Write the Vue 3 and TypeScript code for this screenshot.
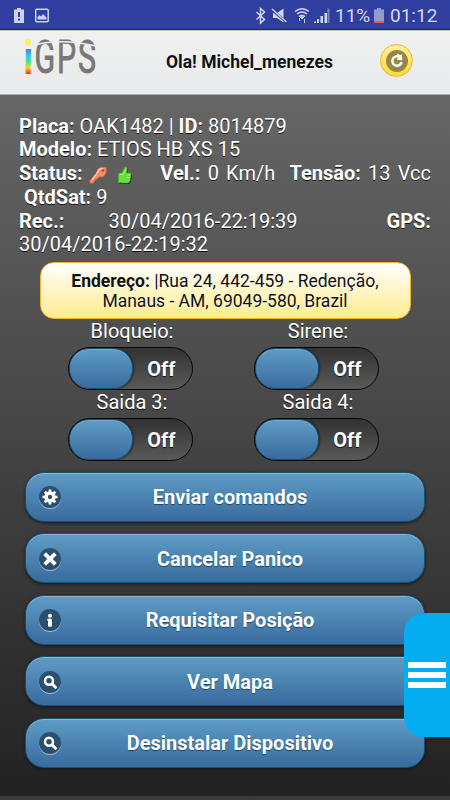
<script setup lang="ts">
import { ref } from 'vue'

interface Relay { label: string; on: boolean }
interface Action { label: string; icon: 'gear' | 'close' | 'info' | 'search' }

const relays = ref<Relay[]>([
  { label: 'Bloqueio:', on: false },
  { label: 'Sirene:', on: false },
  { label: 'Saida 3:', on: false },
  { label: 'Saida 4:', on: false },
])

const actions: Action[] = [
  { label: 'Enviar comandos', icon: 'gear' },
  { label: 'Cancelar Panico', icon: 'close' },
  { label: 'Requisitar Posição', icon: 'info' },
  { label: 'Ver Mapa', icon: 'search' },
  { label: 'Desinstalar Dispositivo', icon: 'search' },
]
</script>

<template>
  <div class="screen">
    <div class="statusbar">
      <svg class="sb-left" width="40" height="16" viewBox="0 0 40 16">
        <path fill="#cdd0ee" fill-rule="evenodd" d="M4 0h4v1.500h3V15H1V1.500h3zM5 4v5h2V4zM5 10.500v2h2v-2z" />
        <rect x="22.700" y="1.200" width="12.500" height="12.500" rx="1" fill="none" stroke="#cdd0ee" stroke-width="1.500" />
        <path fill="#cdd0ee" d="M24.500 11.500V9l2-2 1.500 1.500 2-2.500 3.500 3.500v2z" />
      </svg>
      <svg class="sb-icons" width="76" height="18" viewBox="0 0 76 18">
        <path d="M1.500 5l8 7.500-4 3.500V1.500l4 3.500-8 7.500" fill="none" stroke="#d2d5f2" stroke-width="1.500" />
        <path d="M18 6h4l6.500-4.500v14L22 11h-4z" fill="#d2d5f2" />
        <path d="M16 2l16 13.500" stroke="#303e9f" stroke-width="2.500" />
        <path d="M17 2l14.500 13" stroke="#d2d5f2" stroke-width="1.400" />
        <g fill="none" stroke="#d2d5f2" stroke-width="1.500">
          <path d="M40 4.500q7-5.500 14 0M42 7q5-4 10 0M44 9.700q3-2.500 6 0" />
        </g>
        <path d="M47 12l-2-2h4zM44.500 11v3M49.500 16v-4" stroke="#d2d5f2" fill="#d2d5f2" />
        <path d="M59 16v-1.500h2V16M62 16v-4h2v4M65.500 16V9h2.500v7M69.500 16V6H72v10" fill="#d2d5f2" />
        <path d="M72.500 16V1.500h2V16" fill="#7881c2" />
      </svg>
      <span class="sb-pct">11%</span>
      <svg class="sb-batt" width="10" height="16" viewBox="0 0 10 16">
        <path d="M3 0h4v1.500h3V15H0V1.500h3z" fill="#949bd0" />
        <path d="M0 13h10v2H0z" fill="#d8604c" />
      </svg>
      <span class="sb-time">01:12</span>
    </div>

    <header class="header">
      <svg class="logo" width="80" height="62" viewBox="0 0 80 62">
        <defs>
          <linearGradient id="rainbow" gradientUnits="userSpaceOnUse" x1="0" y1="8" x2="0" y2="43">
            <stop offset="0" stop-color="#fff34a" />
            <stop offset=".18" stop-color="#fff34a" />
            <stop offset=".27" stop-color="#4379f5" />
            <stop offset=".48" stop-color="#35c5ee" />
            <stop offset=".66" stop-color="#48eb64" />
            <stop offset=".82" stop-color="#fbd21e" />
            <stop offset="1" stop-color="#ff2a13" />
          </linearGradient>
        </defs>
        <text class="logo-i" x="2.600" y="42.500" textLength="9.500" lengthAdjust="spacingAndGlyphs" fill="url(#rainbow)">i</text>
        <text class="logo-word" x="13.400" y="42.200" textLength="63.500" lengthAdjust="spacingAndGlyphs">GPS</text>
        <path d="M14 14q26-7 61 1" fill="none" stroke="#eeefef" stroke-width="1.600" />
      </svg>
      <h1 class="greeting">Ola! Michel_menezes</h1>
      <button class="refresh" aria-label="Atualizar">
        <svg width="22" height="22" viewBox="0 0 22 22">
          <circle cx="11" cy="11" r="11" fill="#968743" />
          <path d="M14 7.400A4.700 4.700 0 1 0 15.600 12" fill="none" stroke="#fff" stroke-width="2.500" />
          <path d="M11.700 3.300l1.800 1.700 2.500-.5.300 5.700-5.800-.4 1.900-2.100-1.700-1.700z" fill="#fff" />
        </svg>
      </button>
    </header>

    <main class="content">
      <section class="info">
        <div class="line"><span><b>Placa:</b> OAK1482 | <b>ID:</b> 8014879</span></div>
        <div class="line"><span><b>Modelo:</b> ETIOS HB XS 15</span></div>
        <div class="line spread">
          <span class="status"><b>Status:</b>
            <svg width="18" height="18" viewBox="0 0 18 18">
              <path d="M17 1.500Q12 .200 9 3 7.500 5 8 8L1 14.500V17h3.500v-2H6v-2h2l2-2.300q4 1 6-2 2-3 1-7.200z" fill="#f38c66" stroke="#e36c48" stroke-width="1" />
              <path d="M14.500 3q-4-1-5 2L3 14" fill="none" stroke="#ffc0a4" stroke-width="1.500" />
              <circle cx="14" cy="4.500" r="1.200" fill="#8e4b38" />
            </svg>
            <svg width="18" height="18" viewBox="0 0 18 18">
              <path d="M2.500 7.500L6 7l3-6q2.500-.300 2 3l-.500 3 4.500.300v2.200l-1 5.500-1.500 2H6l-1.500-.500-2 .500z" fill="#222" transform="translate(.9 .9)" />
              <path d="M2.500 7.500L6 7l3-6q2.500-.300 2 3l-.500 3 4.500.300v2.200l-1 5.500-1.500 2H6l-1.500-.500-2 .500z" fill="#64df3d" stroke="#3cb52d" stroke-width=".6" />
              <path d="M3.500 9l4-1 2-5M11 9h3M10 11.500h4" fill="none" stroke="#a7fb70" />
            </svg>
          </span>
          <span class="wide"><b>Vel.:</b> 0 Km/h</span>
          <span class="wide"><b>Tensão:</b> 13 Vcc</span>
        </div>
        <div class="line indent"><span><b>QtdSat:</b> 9</span></div>
        <div class="line spread"><b>Rec.:</b><span class="received">30/04/2016-22:19:39</span><b>GPS:</b></div>
        <div class="line"><span>30/04/2016-22:19:32</span></div>
      </section>

      <section class="address">
        <b>Endereço:</b> |Rua 24, 442-459 - Redenção,<br />Manaus - AM, 69049-580, Brazil
      </section>

      <section class="relays">
        <div v-for="relay in relays" :key="relay.label" class="relay">
          <span class="relay-label">{{ relay.label }}</span>
          <div class="switch" role="switch" :aria-checked="relay.on" @click="relay.on = !relay.on">
            <span v-if="relay.on" class="state">On</span>
            <span class="handle"></span>
            <span v-if="!relay.on" class="state">Off</span>
          </div>
        </div>
      </section>

      <nav class="actions">
        <button v-for="action in actions" :key="action.label" class="action">
          <svg class="action-icon" width="22" height="22" viewBox="0 0 22 22">
            <g v-if="action.icon === 'gear'" fill="none" stroke="#fff">
              <circle cx="11" cy="11" r="3.900" stroke-width="3.500" />
              <path d="M11 3.500v3M11 15.500v3M3.500 11h3M15.500 11h3M5.700 5.700l2 2M14.300 14.300l2 2M5.700 16.300l2-2M14.300 7.700l2-2" stroke-width="2.700" />
            </g>
            <path v-else-if="action.icon === 'close'" d="M5.700 5.700l10.600 10.600M16.300 5.700L5.700 16.300" stroke="#fff" stroke-width="3.900" />
            <g v-else-if="action.icon === 'info'" fill="#fff">
              <circle cx="11" cy="6.700" r="2" />
              <rect x="9" y="9.800" width="4" height="8" rx="1.200" />
              <rect x="8.300" y="9.800" width="3" height="2" rx=".6" />
            </g>
            <g v-else fill="none" stroke="#fff">
              <circle cx="10" cy="9.800" r="4" stroke-width="2.500" />
              <path d="M12.800 12.600l4.700 4.700" stroke-width="2.900" />
            </g>
          </svg>
          <span>{{ action.label }}</span>
        </button>
      </nav>
    </main>

    <button class="drawer" aria-label="Menu"><i></i><i></i><i></i></button>
  </div>
</template>

<style>
body { margin: 0; overflow: hidden; }
</style>

<style scoped>
.screen {
  position: relative;
  display: flex;
  flex-direction: column;
  width: 450px;
  height: 800px;
  overflow: hidden;
  font-family: Roboto, "Liberation Sans", sans-serif;
  background: #333;
}
button { font-family: inherit; padding: 0; border: 0; }
.statusbar {
  box-sizing: border-box;
  flex: none;
  height: 30px;
  padding: 2px 12px 0 13px;
  display: flex;
  align-items: center;
  background: #303e9f;
  border-bottom: 1px solid #142383;
  color: #d5d8f3;
  font-size: 19px;
}
.sb-left { margin-right: auto; }
.sb-icons { margin-right: 4px; }
.sb-pct { width: 35px; margin-right: 4px; font-size: 19px; white-space: nowrap; }
.sb-batt { margin-right: 6px; }
.sb-time { width: 48px; white-space: nowrap; }
.header {
  box-sizing: border-box;
  flex: none;
  height: 65px;
  display: flex;
  align-items: flex-start;
  background: linear-gradient(#f0f0f0, #e8eaeb);
  border-top: 1px solid #c5c7b5;
  border-bottom: 1px solid #aaa;
}
.logo { margin: 0 0 0 21px; width: 80px; flex: none; overflow: visible; }
.logo-i { font: bold 46px Roboto, sans-serif; }
.logo-word { font: 400 47px Roboto, sans-serif; letter-spacing: 3px; fill: #7c7574; stroke: #7c7574; stroke-width: .9; }
.greeting {
  flex: 1;
  margin: 20px 0 0;
  padding-left: 18px;
  text-align: center;
  font-size: 17.500px;
  line-height: 22px;
  font-weight: 700;
  color: #111;
  text-shadow: 0 1px 0 #fff;
  white-space: nowrap;
}
.refresh {
  box-sizing: border-box;
  display: grid;
  place-items: center;
  width: 33px;
  height: 33px;
  margin: 13px 37px 0 0;
  border: 1.500px solid #f2b71c;
  border-radius: 50%;
  background: linear-gradient(#fff0a0, #ffd93d);
}
.content {
  flex: 1;
  box-sizing: border-box;
  padding: 18.500px 19px 0;
  background: linear-gradient(#666, #222 700px, #3b3b3b 702px);
  color: #fff;
}
.info { font-size: 20px; text-shadow: 0 1px 0 #111; }
.line { height: 23.750px; line-height: 24px; white-space: nowrap; }
.line.spread { display: flex; justify-content: space-between; }
.line.indent { padding-left: 5px; }
.wide { word-spacing: 2.200px; }
.received { padding-right: 45px; }
.status { display: flex; align-items: center; width: 127px; }
.status svg { margin-left: 7px; margin-top: 4px; }
.status svg:first-of-type { margin-left: 6px; }
.status svg + svg { margin-left: 9.500px; }
.address {
  box-sizing: border-box;
  width: 371px;
  height: 57px;
  margin: 6px 0 0 20.500px;
  padding-top: 8px;
  border: 1.500px solid #f2b52e;
  border-radius: 14px;
  background: linear-gradient(#fff, #ffec8c);
  color: #111;
  text-align: center;
  font-size: 17.500px;
  line-height: 20px;
  text-shadow: 0 1px 0 #fff;
  white-space: nowrap;
}
.relays {
  display: grid;
  grid-template-columns: 186px 186px;
  grid-auto-rows: 71.300px;
  padding-left: 20px;
}
.relay { display: flex; flex-direction: column; align-items: center; }
.relay-label { height: 28px; line-height: 24px; font-size: 20px; text-shadow: 0 1px 0 #111; }
.switch {
  box-sizing: border-box;
  display: flex;
  align-items: center;
  width: 125px;
  height: 43px;
  border: 1.500px solid #050505;
  border-radius: 22px;
  margin-left: -3.500px;
  background: linear-gradient(#333, #595959);
  overflow: hidden;
}
.handle {
  box-sizing: border-box;
  width: 64px;
  height: 41px;
  border: 1px solid #145072;
  border-radius: 20px;
  background: linear-gradient(#5f9cc5, #396b9e);
  box-shadow: inset 0 1px 0 #75acd0, 1px 0 2px #222;
}
.state { flex: 1; padding-right: 2px; text-align: center; font-size: 20px; font-weight: 700; text-shadow: 0 1px 1px #111; }
.actions { display: flex; flex-direction: column; gap: 11.300px; margin: 10px 6px 0; }
.action {
  box-sizing: border-box;
  display: flex;
  align-items: center;
  width: 400px;
  height: 50.200px;
  padding: 1.500px 0 0 13px;
  border: 1.500px solid #145072;
  border-radius: 19px;
  background: linear-gradient(#5f9cc5, #396b9e);
  box-shadow: inset 0 1px 0 #8ab7d5, 0 1px 3px #151515;
  color: #fff;
  font-size: 20px;
  font-weight: 700;
  text-shadow: 0 1px 1px #194b6b;
}
.action-icon {
  flex: none;
  border-radius: 50%;
  background: #2b506f;
  box-shadow: 0 1px 0 rgba(255, 255, 255, .5);
}
.action span { flex: 1; padding-right: 25px; text-align: center; }
.drawer {
  position: absolute;
  right: 0;
  top: 613px;
  display: flex;
  flex-direction: column;
  justify-content: center;
  gap: 4px;
  width: 46px;
  height: 124px;
  padding-left: 4px;
  border-radius: 20px 0 0 20px;
  background: #03adef;
}
.drawer i { width: 38px; height: 6px; background: #fff; }
</style>
